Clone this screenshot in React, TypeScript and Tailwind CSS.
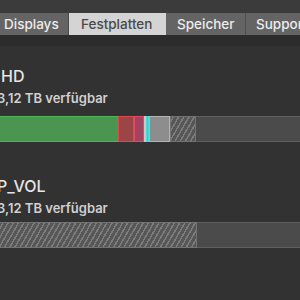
import React from "react";

const hatch =
  "repeating-linear-gradient(-60deg, #575757 0px, #575757 3px, #7c7c7c 3px, #7c7c7c 4.5px)";

function Seg({ w, bg, border, style }: { w: number; bg: string; border: string; style?: React.CSSProperties }) {
  return (
    <div
      className="h-full shrink-0 box-border"
      style={{ width: w, background: bg, border: `1px solid ${border}`, ...style }}
    />
  );
}

export default function App() {
  return (
    <div
      className="w-[300px] h-[300px] overflow-hidden bg-[#323232] flex flex-col"
      style={{ fontFamily: 'Inter, "Liberation Sans", Arial, sans-serif' }}
    >
      <div className="h-[13px] bg-[#3b3b3b]" />
      <div className="h-[22px] bg-[#646464] flex text-[13.5px] font-medium leading-[22px] text-[#ececec]">
        <div className="w-[68px] shrink-0 pl-[4px] whitespace-nowrap">Displays</div>
        <div className="w-[98px] shrink-0 bg-[#d4d4d4] text-[#4a4a4a] pl-[12px] border-l border-[#4a4a4a] whitespace-nowrap">Festplatten</div>
        <div className="w-[80px] shrink-0 pl-[11px] border-r border-[#4f4f4f] whitespace-nowrap">Speicher</div>
        <div className="shrink-0 pl-[10px] whitespace-nowrap">Support</div>
      </div>
      <div className="h-[11px] bg-[#2c2c2c]" />
      <div className="flex flex-col">
        <div className="mt-[20px] h-[20px] text-[16px] font-medium leading-[20px] text-[#e6e6e6] ml-[1px]">HD</div>
        <div className="mt-[5px] h-[14px] text-[13px] font-semibold leading-[14px] text-[#d0d0d0] -ml-[3px] whitespace-nowrap">
          3,12 TB verfügbar
        </div>
        <div className="mt-[11px] h-[26px] flex">
          <Seg w={118} bg="#4a9550" border="#4fb556" style={{ borderLeft: "none", borderRight: "none" }} />
          <Seg w={16} bg="#9b4646" border="#e0494d" />
          <Seg w={10} bg="#a24360" border="#e04a69" />
          <Seg w={2} bg="#b8b8b8" border="#c8c8c8" />
          <Seg w={3} bg="#3fc7c9" border="#48dcdc" />
          <Seg w={21} bg="#8d8d8d" border="#b4b4b4" />
          <Seg w={26} bg={hatch} border="#737373" />
          <div className="h-full flex-1 bg-[#4b4b4b] border-y border-[#5f5f5f]" />
        </div>
        <div className="mt-[34px] h-[20px] text-[16px] font-medium leading-[20px] text-[#e6e6e6] -ml-[3px]">P_VOL</div>
        <div className="mt-[5px] h-[14px] text-[13px] font-semibold leading-[14px] text-[#d0d0d0] -ml-[3px] whitespace-nowrap">
          3,12 TB verfügbar
        </div>
        <div className="mt-[7px] h-[26px] flex">
          <Seg w={197} bg={hatch} border="#737373" style={{ borderLeft: "none" }} />
          <div className="h-full flex-1 bg-[#4b4b4b] border-y border-[#5f5f5f]" />
        </div>
      </div>
    </div>
  );
}
